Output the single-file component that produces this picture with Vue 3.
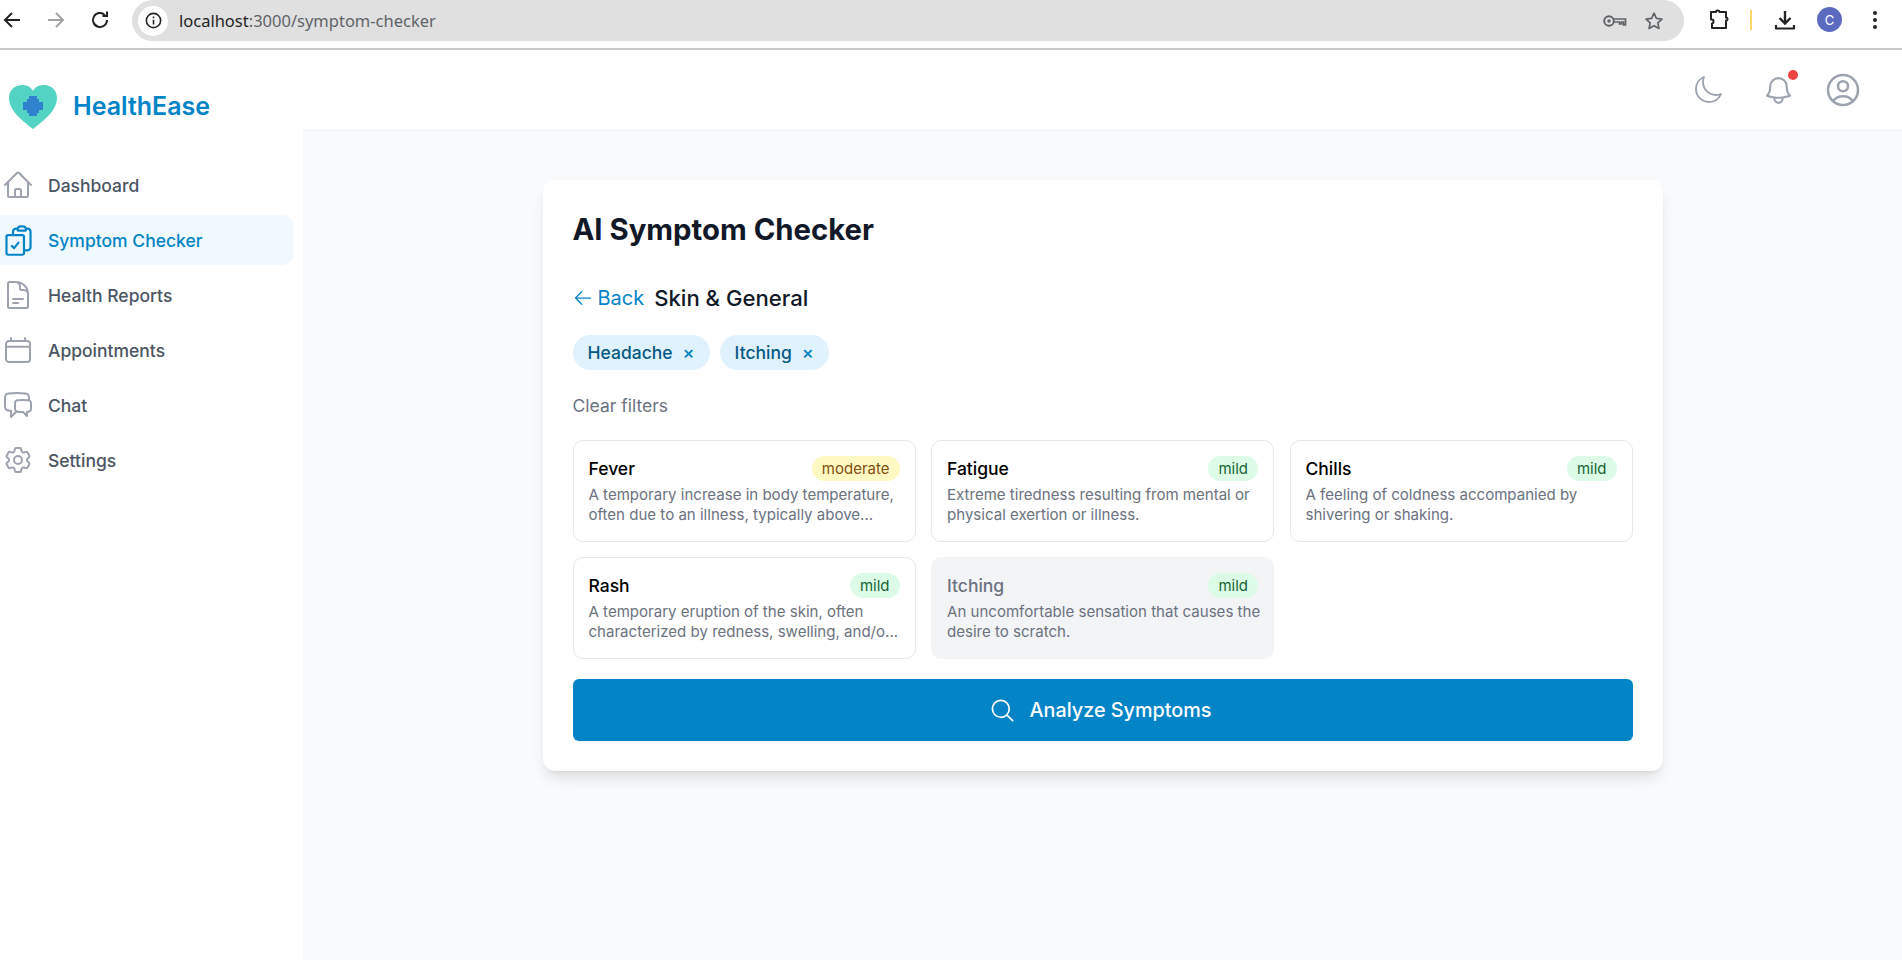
<script setup>
const navItems = [
  { label: 'Dashboard', icon: 'M2.25 12l8.954-8.955c.44-.439 1.152-.439 1.591 0L21.75 12M4.5 9.75v10.125c0 .621.504 1.125 1.125 1.125H9.75v-4.875c0-.621.504-1.125 1.125-1.125h2.25c.621 0 1.125.504 1.125 1.125V21h4.125c.621 0 1.125-.504 1.125-1.125V9.75M8.25 21h8.25' },
  { label: 'Symptom Checker', active: true, icon: 'M11.35 3.836c-.065.21-.1.433-.1.664 0 .414.336.75.75.75h4.5a.75.75 0 00.75-.75 2.25 2.25 0 00-.1-.664m-5.8 0A2.251 2.251 0 0113.5 2.25H15c1.012 0 1.867.668 2.15 1.586m-5.8 0c-.376.023-.75.05-1.124.08C9.095 4.01 8.25 4.973 8.25 6.108V8.25m8.9-4.414c.376.023.75.05 1.124.08 1.131.094 1.976 1.057 1.976 2.192V16.5A2.25 2.25 0 0118 18.75h-2.25m-7.5-10.5H4.875c-.621 0-1.125.504-1.125 1.125v11.25c0 .621.504 1.125 1.125 1.125h9.75c.621 0 1.125-.504 1.125-1.125V18.75m-7.5-10.5h6.375c.621 0 1.125.504 1.125 1.125v9.375m-8.25-3l1.5 1.5 3-3.75' },
  { label: 'Health Reports', icon: 'M19.5 14.25v-2.625a3.375 3.375 0 00-3.375-3.375h-1.5A1.125 1.125 0 0113.5 7.125v-1.5a3.375 3.375 0 00-3.375-3.375H8.25m0 12.75h7.5m-7.5 3H12M10.5 2.25H5.625c-.621 0-1.125.504-1.125 1.125v17.25c0 .621.504 1.125 1.125 1.125h12.75c.621 0 1.125-.504 1.125-1.125V11.25a9 9 0 00-9-9z' },
  { label: 'Appointments', icon: 'M6.75 3v2.25M17.25 3v2.25M3 18.75V7.5a2.25 2.25 0 012.25-2.25h13.5A2.25 2.25 0 0121 7.5v11.25A2.25 2.25 0 0118.75 21H5.25A2.25 2.25 0 013 18.75zM3 9.5h18' },
  { label: 'Chat', icon: 'M20.25 8.511c.884.284 1.5 1.128 1.5 2.097v4.286c0 1.136-.847 2.1-1.98 2.193-.34.027-.68.052-1.02.072v3.091l-3-3c-1.354 0-2.694-.055-4.02-.163a2.115 2.115 0 01-.825-.242m9.345-8.334a2.126 2.126 0 00-.476-.095 48.64 48.64 0 00-8.048 0c-1.131.094-1.976 1.057-1.976 2.192v4.286c0 .837.46 1.58 1.155 1.951m9.345-8.334V6.637c0-1.621-1.152-3.026-2.76-3.235A48.455 48.455 0 0011.25 3c-2.115 0-4.198.137-6.24.402-1.608.209-2.76 1.614-2.76 3.235v6.226c0 1.621 1.152 3.026 2.76 3.235.577.075 1.157.14 1.74.194V21l4.155-4.155' },
  { label: 'Settings', icon: 'M9.594 3.94c.09-.542.56-.94 1.11-.94h2.593c.55 0 1.02.398 1.11.94l.213 1.281c.063.374.313.686.645.87.074.04.147.083.22.127.324.196.72.257 1.075.124l1.217-.456a1.125 1.125 0 011.37.49l1.296 2.247a1.125 1.125 0 01-.26 1.431l-1.003.827c-.293.24-.438.613-.431.992a6.759 6.759 0 010 .255c-.007.378.138.75.43.99l1.005.828c.424.35.534.954.26 1.43l-1.298 2.247a1.125 1.125 0 01-1.369.491l-1.217-.456c-.355-.133-.75-.072-1.076.124a6.57 6.57 0 01-.22.128c-.331.183-.581.495-.644.869l-.213 1.28c-.09.543-.56.941-1.11.941h-2.594c-.55 0-1.02-.398-1.11-.94l-.213-1.281c-.062-.374-.312-.686-.644-.87a6.52 6.52 0 01-.22-.127c-.325-.196-.72-.257-1.076-.124l-1.217.456a1.125 1.125 0 01-1.369-.49l-1.297-2.247a1.125 1.125 0 01.26-1.431l1.004-.827c.292-.24.437-.613.43-.992a6.932 6.932 0 010-.255c.007-.378-.138-.75-.43-.99l-1.004-.828a1.125 1.125 0 01-.26-1.43l1.297-2.247a1.125 1.125 0 011.37-.491l1.216.456c.356.133.751.072 1.076-.124.072-.044.146-.087.22-.128.332-.183.582-.495.644-.869l.214-1.281zM15 12a3 3 0 11-6 0 3 3 0 016 0z' }
]

const tags = ['Headache', 'Itching']

const symptoms = [
  { name: 'Fever', severity: 'moderate', text: 'A temporary increase in body temperature, often due to an illness, typically above...' },
  { name: 'Fatigue', severity: 'mild', text: 'Extreme tiredness resulting from mental or physical exertion or illness.' },
  { name: 'Chills', severity: 'mild', text: 'A feeling of coldness accompanied by shivering or shaking.' },
  { name: 'Rash', severity: 'mild', text: 'A temporary eruption of the skin, often characterized by redness, swelling, and/o...' },
  { name: 'Itching', severity: 'mild', selected: true, text: 'An uncomfortable sensation that causes the desire to scratch.' }
]
</script>

<template>
  <div class="page">
    <div class="chrome">
      <svg class="c-btn" viewBox="0 0 24 24"><path d="M20 12H5M12 5l-7 7 7 7" fill="none" stroke="#222" stroke-width="2" /></svg>
      <svg class="c-btn" viewBox="0 0 24 24"><path d="M4 12h15M12 5l7 7-7 7" fill="none" stroke="#a3a3a3" stroke-width="2" /></svg>
      <svg class="c-btn" viewBox="0 0 24 24"><path d="M19 12a7 7 0 11-2.2-5.100M19 3.500V8h-4.500" fill="none" stroke="#222" stroke-width="2" /></svg>
      <div class="urlbar">
        <span class="info">
          <svg viewBox="0 0 24 24" width="19" height="19"><circle cx="12" cy="12" r="9" fill="none" stroke="#222" stroke-width="2" /><path d="M12 11v6M12 7v2" stroke="#222" stroke-width="2" /></svg>
        </span>
        <span class="url"><span class="host">localhost</span>:3000/symptom-checker</span>
        <svg class="key" viewBox="0 0 24 12" width="24" height="12"><circle cx="6" cy="6" r="4.800" fill="none" stroke="#5f6368" stroke-width="1.900" /><circle cx="6" cy="6" r="1.700" fill="#5f6368" /><path d="M10.500 4h12v6h-2V7h-2v2h-2V7h-6" fill="none" stroke="#5f6368" stroke-width="1.700" /></svg>
        <svg class="star" viewBox="0 0 24 24" width="22" height="22"><path d="M12 3.500l2.600 5.700 6.100.7-4.500 4.200 1.200 6.100-5.400-3.100-5.400 3.100 1.200-6.100-4.500-4.200 6.100-.7z" fill="none" stroke="#5f6368" stroke-width="1.800" stroke-linejoin="round" /></svg>
      </div>
      <svg class="puzzle" viewBox="0 0 24 24" width="24" height="24"><path d="M4 4h5c0-2 3.500-2 3.500 0H19v5.500c2 0 2 3 0 3V20H5v-4.500c2 0 2-4 0-4H4z" fill="none" stroke="#222" stroke-width="2" stroke-linejoin="round" /></svg>
      <span class="bar"></span>
      <svg class="download" viewBox="0 0 24 24" width="24" height="24"><path d="M12 3v12M6.500 10l5.500 5.500 5.500-5.500" fill="none" stroke="#222" stroke-width="2.400" /><path d="M3 17v3.500h18V17" fill="none" stroke="#222" stroke-width="2.200" stroke-linejoin="round" /></svg>
      <span class="avatar">C</span>
      <span class="kebab"><i></i><i></i><i></i></span>
    </div>

    <div class="layout">
      <aside class="sidebar">
        <div class="brand">
          <svg viewBox="0 0 48 44" width="48" height="44">
            <path d="M24 44C14 36 0 26 0 13 0 5 6 0 13 0c5 0 9 2 11 6 2-4 6-6 11-6 7 0 13 5 13 13 0 13-14 23-24 31z" fill="#52d3c4" />
            <path d="M20 11h8v3h2v3h4v8h-4v3h-2v3h-8v-3h-2v-3h-4v-8h4v-3h2z" fill="#3182ce" />
          </svg>
          <span>HealthEase</span>
        </div>
        <nav class="menu">
          <a v-for="item in navItems" :key="item.label" class="menu-item" :class="{ active: item.active }">
            <svg viewBox="0 0 24 24" :width="item.active ? 35 : 32" :height="item.active ? 35 : 32"><path :d="item.icon" fill="none" stroke="currentColor" stroke-width="1.500" stroke-linecap="round" stroke-linejoin="round" /></svg>
            <span>{{ item.label }}</span>
          </a>
        </nav>
      </aside>

      <div class="right">
        <header class="topbar">
          <svg viewBox="0 0 24 24" width="32" height="32"><path d="M21.752 15.002A9.718 9.718 0 0118 15.750c-5.385 0-9.750-4.365-9.750-9.750 0-1.330.266-2.597.748-3.752A9.753 9.753 0 003 11.250C3 16.635 7.365 21 12.750 21a9.753 9.753 0 009.002-5.998z" fill="none" stroke="#9ca3af" stroke-width="1.400" stroke-linejoin="round" /></svg>
          <span class="bell">
            <svg viewBox="0 0 24 24" width="33" height="33"><path d="M14.857 17.082a23.848 23.848 0 005.454-1.310A8.967 8.967 0 0118 9.750v-.7V9A6 6 0 006 9v.75a8.967 8.967 0 01-2.312 6.022c1.733.64 3.560 1.085 5.455 1.310m5.714 0a24.255 24.255 0 01-5.714 0m5.714 0a3 3 0 11-5.714 0" fill="none" stroke="#9ca3af" stroke-width="1.500" stroke-linejoin="round" /></svg>
            <i class="dot"></i>
          </span>
          <svg viewBox="0 0 24 24" width="40" height="40"><path d="M17.982 18.725A7.488 7.488 0 0012 15.750a7.488 7.488 0 00-5.982 2.975m11.963 0a9 9 0 10-11.963 0m11.963 0A8.966 8.966 0 0112 21a8.966 8.966 0 01-5.982-2.275M15 9.750a3 3 0 11-6 0 3 3 0 016 0z" fill="none" stroke="#9ca3af" stroke-width="1.500" stroke-linejoin="round" /></svg>
        </header>

        <main class="content">
          <section class="panel">
            <h1>AI Symptom Checker</h1>
            <div class="crumbs">
              <a class="back">
                <svg viewBox="0 0 24 24" width="20" height="20"><path d="M10.500 19.500L3 12m0 0l7.500-7.500M3 12h18" fill="none" stroke="currentColor" stroke-width="1.500" stroke-linecap="round" stroke-linejoin="round" /></svg>
                Back
              </a>
              <h2>Skin &amp; General</h2>
            </div>
            <div class="tags">
              <span v-for="tag in tags" :key="tag" class="tag">{{ tag }}<b>×</b></span>
            </div>
            <a class="clear">Clear filters</a>
            <div class="grid">
              <div v-for="s in symptoms" :key="s.name" class="symptom" :class="{ selected: s.selected }">
                <div class="symptom-head">
                  <h3>{{ s.name }}</h3>
                  <span class="badge" :class="s.severity">{{ s.severity }}</span>
                </div>
                <p>{{ s.text }}</p>
              </div>
            </div>
            <button class="analyze">
              <svg viewBox="0 0 24 24" width="27" height="27"><path d="M21 21l-5.197-5.197m0 0A7.500 7.500 0 105.196 5.196a7.500 7.500 0 0010.607 10.607z" fill="none" stroke="#fff" stroke-width="1.500" stroke-linecap="round" stroke-linejoin="round" /></svg>
              Analyze Symptoms
            </button>
          </section>
        </main>
      </div>
    </div>
  </div>
</template>

<style>
html, body { margin: 0; }
</style>

<style scoped>
.page {
  width: 1902px;
  height: 960px;
  overflow: hidden;
  display: flex;
  flex-direction: column;
  font-family: Inter, "Liberation Sans", sans-serif;
  background: #fff;
}

.chrome {
  height: 48px;
  border-bottom: 2px solid #cbcbcb;
  display: flex;
  align-items: flex-start;
  flex-shrink: 0;
}
.c-btn { width: 24px; height: 24px; margin: 8px 20px 0 0; flex-shrink: 0; }
.urlbar {
  width: 1552px;
  height: 41px;
  border-radius: 21px;
  background: #e0e0e0;
  display: flex;
  align-items: center;
  padding: 0 0 0 6px;
  box-sizing: border-box;
}
.info {
  width: 30px;
  height: 30px;
  border-radius: 50%;
  background: #fff;
  display: flex;
  align-items: center;
  justify-content: center;
}
.url {
  margin-left: 11px;
  font-family: "Noto Sans", sans-serif;
  font-size: 16.5px;
  color: #5f6368;
  flex: 1;
}
.host { color: #1f1f1f; }
.key { margin-right: 16px; }
.star { margin-right: 19px; }
.puzzle { margin: 8px 0 0 23px; }
.bar { width: 2px; height: 20px; background: #fdd663; margin: 10px 0 0 19px; }
.download { margin: 8px 0 0 21px; }
.avatar {
  width: 25px;
  height: 25px;
  border-radius: 50%;
  background: #5c6bc0;
  color: #fff;
  font-size: 13px;
  display: flex;
  align-items: center;
  justify-content: center;
  margin: 7px 0 0 20px;
}
.kebab { display: flex; flex-direction: column; gap: 3px; margin: 11px 0 0 31px; }
.kebab i { width: 4px; height: 4px; border-radius: 50%; background: #222; }

.layout { flex: 1; display: flex; min-height: 0; }

.sidebar { width: 303px; flex-shrink: 0; background: #fff; }
.brand {
  display: flex;
  align-items: center;
  gap: 16px;
  padding: 35px 0 0 9px;
  color: #0284c7;
  font-size: 25px;
  font-weight: 600;
}
.brand span { margin-bottom: 2px; }
.menu { display: flex; flex-direction: column; gap: 5px; margin-top: 31px; padding-right: 10px; }
.menu-item {
  display: flex;
  align-items: center;
  gap: 14px;
  height: 50px;
  padding-left: 2px;
  border-radius: 0 10px 10px 0;
  color: #4b5563;
  font-size: 17.5px;
  font-weight: 500;
}
.menu-item svg { color: #9ca3af; flex-shrink: 0; }
.menu-item.active { background: #f0f9ff; color: #0284c7; }
.menu-item.active svg { color: #0284c7; margin: 0 -1.5px; }

.right { flex: 1; display: flex; flex-direction: column; min-width: 0; }
.topbar {
  height: 81px;
  flex-shrink: 0;
  background: #fff;
  border-bottom: 1px solid #f0f1f3;
  box-sizing: border-box;
  display: flex;
  align-items: center;
  justify-content: flex-end;
  padding: 0 39px 0 0;
}
.bell { position: relative; display: flex; margin: 0 28px 0 38px; }
.dot {
  position: absolute;
  top: -4px;
  right: -3px;
  width: 10px;
  height: 10px;
  border-radius: 50%;
  background: #ef4444;
}

.content { flex: 1; background: #f9fafb; padding-top: 49px; }
.panel {
  width: 1120px;
  margin: 0 auto;
  box-sizing: border-box;
  padding: 30px;
  background: #fff;
  border-radius: 12px;
  box-shadow: 0 10px 15px -3px rgba(0, 0, 0, 0.1), 0 4px 6px -4px rgba(0, 0, 0, 0.1);
}
h1 { margin: 0; font-size: 29.3px; line-height: 40px; font-weight: 700; color: #111827; }
.crumbs { display: flex; align-items: center; gap: 10px; margin-top: 33px; height: 30px; }
.back { display: flex; align-items: center; gap: 5px; font-size: 20px; color: #0284c7; }
h2 { margin: 0; font-size: 22.1px; font-weight: 500; color: #111827; }
.tags { display: flex; gap: 10px; margin-top: 22px; }
.tag {
  display: flex;
  align-items: center;
  height: 35px;
  padding: 0 15px;
  border-radius: 18px;
  background: #e0f2fe;
  color: #075985;
  font-size: 17.5px;
  font-weight: 500;
}
.tag b { margin-left: 10px; font-weight: 500; font-size: 18px; color: #0284c7; }
.clear { display: block; margin-top: 24px; font-size: 17.5px; line-height: 24px; color: #6b7280; }
.grid { display: grid; grid-template-columns: repeat(3, 1fr); gap: 15px 15.5px; margin-top: 22px; }
.symptom {
  box-sizing: border-box;
  height: 102px;
  padding: 14px 15px;
  border: 1px solid #e5e7eb;
  border-radius: 10px;
}
.symptom-head { display: flex; align-items: center; justify-content: space-between; height: 26px; }
h3 { margin: 0; font-size: 17.5px; font-weight: 500; color: #000; }
.badge {
  height: 25px;
  line-height: 25px;
  padding: 0 10px;
  border-radius: 13px;
  font-size: 15px;
}
.badge.mild { background: #dcfce7; color: #166534; }
.badge.moderate { background: #fef9c3; color: #854d0e; }
.symptom p { margin: 4px -6px 0 0; font-size: 15.05px; line-height: 20px; color: #6b7280; }
.symptom.selected { background: #f3f4f6; border-color: #f3f4f6; }
.symptom.selected h3 { color: #6b7280; }
.analyze {
  display: flex;
  align-items: center;
  justify-content: center;
  gap: 14px;
  width: 100%;
  height: 62px;
  margin-top: 20px;
  padding: 0 5px 0 0;
  border: none;
  border-radius: 6px;
  background: #0284c7;
  color: #fff;
  font-family: inherit;
  font-size: 19.8px;
  font-weight: 500;
}
</style>
